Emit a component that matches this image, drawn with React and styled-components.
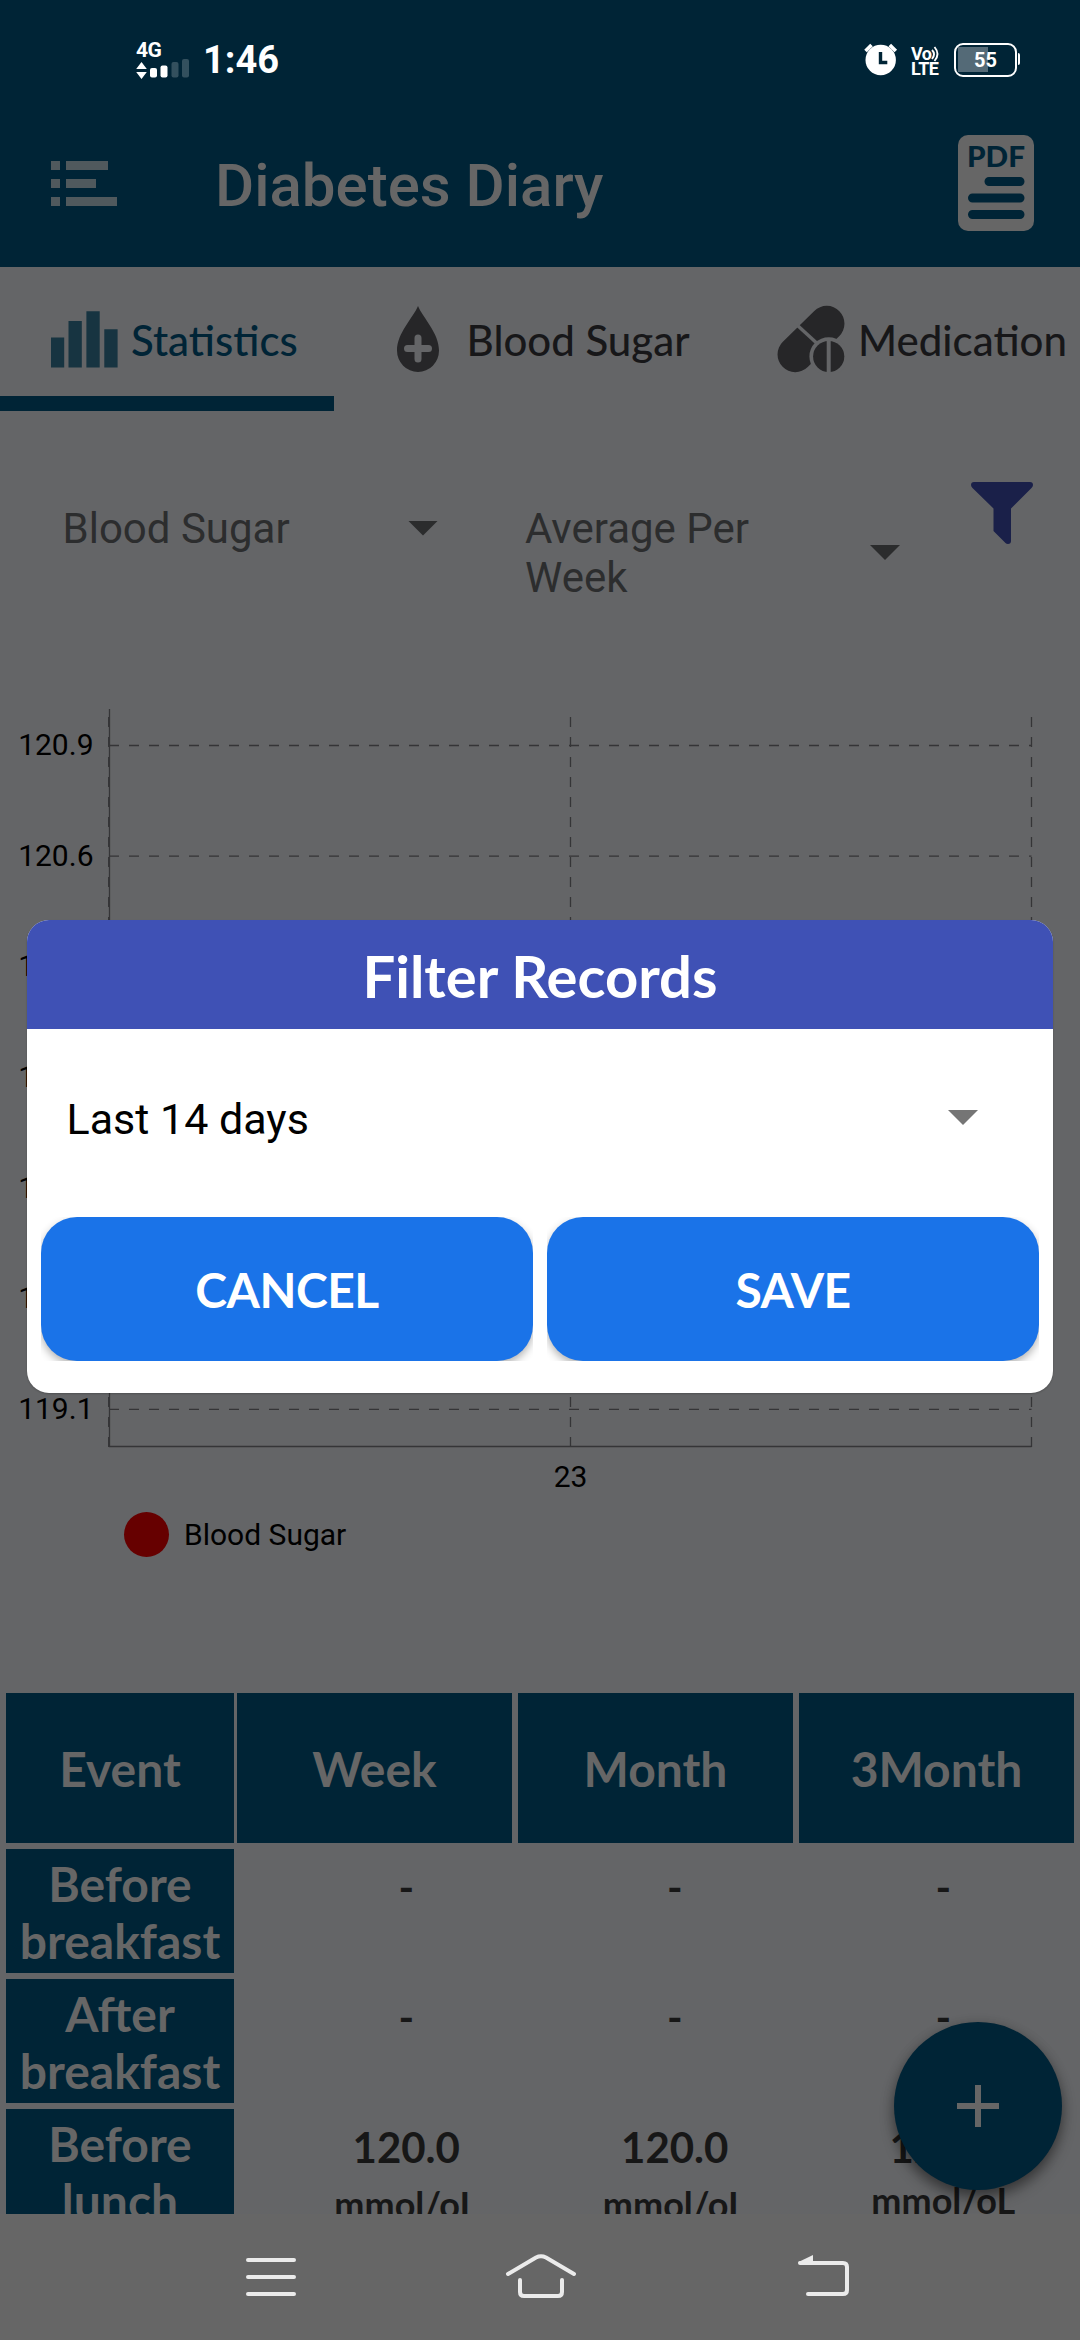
import React from "react";
import styled, { createGlobalStyle } from "styled-components";

const navy = "#002436";
const ground = "#646567";
const dimWhite = "#666666";

const GlobalStyle = createGlobalStyle`
  * { box-sizing: border-box; }
  body { margin: 0; background: ${ground}; }
`;

const Screen = styled.div`
  position: relative;
  display: flex;
  flex-direction: column;
  width: 1080px;
  height: 2340px;
  overflow: hidden;
  background: ${ground};
  font-family: Roboto, sans-serif;
`;

const StatusBar = styled.div`
  display: flex;
  align-items: center;
  height: 99px;
  padding: 20px 60px 0 136px;
  background: ${navy};
  color: #fff;
`;

const Signal = styled.div`
  display: flex;
  flex-direction: column;
  width: 54px;
  height: 42px;
`;

const NetworkType = styled.span`
  height: 20px;
  font-size: 21px;
  line-height: 22px;
  font-weight: 700;
  letter-spacing: -0.5px;
`;

const Clock = styled.span`
  margin-left: 13px;
  font-size: 38px;
  line-height: 44px;
  font-weight: 700;
`;

const StatusIcons = styled.div`
  display: flex;
  align-items: center;
  margin-left: auto;
  height: 42px;
`;

const Volte = styled.div`
  display: flex;
  flex-direction: column;
  width: 30px;
  margin: 2px 13px 0 13px;
  font-weight: 700;
`;

const VolteTop = styled.div`
  display: flex;
  height: 15px;
  font-size: 18px;
  line-height: 15px;
  letter-spacing: -0.6px;
`;

const VolteBottom = styled.div`
  height: 15px;
  font-size: 18px;
  line-height: 15px;
  letter-spacing: -0.6px;
`;

const Battery = styled.div`
  position: relative;
  display: flex;
  align-items: center;
  justify-content: center;
  width: 63px;
  height: 34px;
  margin-right: 3px;
  border: 2.5px solid #fff;
  border-radius: 9px;
  font-size: 20px;
  line-height: 22px;
  font-weight: 700;
  background: linear-gradient(90deg, #546a77 0 30px, transparent 30px) 2px 2px / 55px 25px no-repeat;
  &::after {
    content: "";
    position: absolute;
    right: -5px;
    top: 8px;
    width: 2.5px;
    height: 12px;
    border-radius: 0 2px 2px 0;
    background: #fff;
  }
`;

const AppBar = styled.header`
  display: flex;
  align-items: center;
  height: 168px;
  padding: 0 46px 0 51px;
  background: ${navy};
`;

const AppTitle = styled.h1`
  flex: 1;
  margin: 5px 0 0 98px;
  font-size: 60px;
  line-height: 70px;
  font-weight: 500;
  color: ${dimWhite};
`;

const Tabs = styled.nav`
  display: flex;
  height: 144px;
`;

const Tab = styled.div`
  position: relative;
  display: flex;
  flex: none;
  align-items: center;
  gap: 13px;
  width: ${(p) => p.$width}px;
  padding-left: 50px;
  font-family: Lato, sans-serif;
  font-size: 42px;
  line-height: 50px;
  white-space: nowrap;
  color: ${(p) => (p.$active ? navy : "#171719")};
  font-weight: 500;
  &::after {
    content: "";
    display: ${(p) => (p.$active ? "block" : "none")};
    position: absolute;
    left: 0;
    right: 0;
    bottom: 0;
    height: 15px;
    background: ${navy};
  }
`;

const TabLabel = styled.span`
  margin-left: ${(p) => p.$inset || 0}px;
  padding-top: 1px;
`;

const Controls = styled.div`
  display: flex;
  align-items: flex-start;
  height: 289px;
  padding: 71px 47px 0 62.5px;
`;

const Select = styled.div`
  display: flex;
  align-items: center;
  justify-content: space-between;
  width: ${(p) => p.$width}px;
  margin: 22px ${(p) => p.$gap}px 0 0;
  font-size: 42px;
  line-height: 49px;
  color: #2c2d2e;
`;

const SelectLabel = styled.span`
  max-width: 270px;
`;

const Caret = styled.span`
  width: 30px;
  height: 15px;
  margin-top: ${(p) => p.$lift || 0}px;
  clip-path: polygon(0 0, 100% 0, 50% 100%);
  background: ${(p) => p.$color};
`;

const Plot = styled.svg`
  display: block;
  flex: none;
`;

const Legend = styled.div`
  display: flex;
  align-items: center;
  gap: 15px;
  height: 193px;
  padding: 0 0 125px 124px;
  font-size: 30px;
  line-height: 36px;
  color: #000;
`;

const LegendLabel = styled.span`
  padding-top: 2px;
`;

const LegendDot = styled.span`
  width: 45px;
  height: 45px;
  border-radius: 50%;
  background: #660000;
`;

const Table = styled.section`
  display: flex;
  flex: 1;
  flex-direction: column;
  gap: 6px;
  min-height: 0;
  padding: 0 6px;
  overflow: hidden;
  font-family: Lato, sans-serif;
  font-weight: 700;
`;

const HeadRow = styled.div`
  display: grid;
  flex: none;
  grid-template-columns: 231px 281px 281px 275px;
  height: 150px;
`;

const HeadCell = styled.div`
  display: flex;
  align-items: center;
  justify-content: center;
  margin-right: ${(p) => p.$gap}px;
  padding-top: 1px;
  background: ${navy};
  color: ${dimWhite};
  font-size: 48px;
  line-height: 57px;
`;

const Row = styled.div`
  display: flex;
  flex: none;
  height: 124px;
`;

const EventCell = styled.div`
  flex: none;
  width: 228px;
  margin-right: 38px;
  padding-top: 6px;
  background: ${navy};
  color: ${dimWhite};
  font-size: 48px;
  line-height: 57px;
  text-align: center;
`;

const ValueCell = styled.div`
  display: flex;
  flex: none;
  flex-direction: column;
  width: 268.5px;
  padding-top: 13px;
  font-size: 42px;
  line-height: 50px;
  text-align: center;
  color: #171717;
`;

const Unit = styled.span`
  font-size: 36px;
  line-height: 44px;
  padding-top: ${(p) => p.$drop}px;
`;

const AddButton = styled.button`
  position: absolute;
  left: 894px;
  top: 2022px;
  display: grid;
  place-items: center;
  width: 168px;
  height: 168px;
  padding: 0;
  border: 0;
  border-radius: 50%;
  background: ${navy};
  box-shadow: 0 8px 14px rgba(0, 0, 0, 0.38), 0 2px 12px rgba(0, 0, 0, 0.18);
`;

const SystemNav = styled.footer`
  display: flex;
  flex: none;
  gap: 203px;
  height: 126px;
  padding: 36px 0 0 241px;
  background: #666666;
`;

const NavIcon = styled.svg`
  flex: none;
  margin-right: ${(p) => p.$space || 0}px;
`;

const Dialog = styled.div`
  position: absolute;
  left: 27px;
  top: 920px;
  display: flex;
  flex-direction: column;
  width: 1026px;
  height: 473px;
  border-radius: 22px;
  overflow: hidden;
  background: #fff;
  box-shadow: 0 1px 2px rgba(0, 0, 0, 0.2);
`;

const DialogTitle = styled.h2`
  height: 109px;
  margin: 0;
  padding-top: 4px;
  background: #3f51b5;
  color: #fff;
  font-family: Lato, sans-serif;
  font-size: 58px;
  line-height: 104px;
  font-weight: 700;
  text-align: center;
`;

const DialogSelect = styled.div`
  display: flex;
  align-items: center;
  justify-content: space-between;
  height: 188px;
  padding: 0 75px 9px 39.5px;
  font-size: 43px;
  line-height: 50px;
  color: #000;
`;

const DialogActions = styled.div`
  display: flex;
  gap: 14px;
  padding: 0 14px;
`;

const ActionClip = styled.div`
  width: 492px;
  height: 144px;
  overflow: hidden;
`;

const Action = styled.button`
  width: 100%;
  height: 144px;
  padding: 2px 0 0;
  border: 0;
  border-radius: 36px;
  background: #1a73e8;
  box-shadow: 0 4px 8px rgba(0, 0, 0, 0.3);
  color: #fff;
  font-family: Lato, sans-serif;
  font-size: 48px;
  letter-spacing: -0.5px;
  font-weight: 700;
  line-height: 58px;
`;

const SignalBars = () => (
  <svg width="54" height="22" viewBox="136 58 54 22">
    <path d="M141.5 61l5.3 7h-10.6zM141.5 78l5.3-7h-10.6z" fill="#fff" />
    <rect x="150" y="67" width="7" height="9.5" rx="2" fill="#fff" />
    <rect x="160.5" y="64.5" width="7" height="12" rx="2" fill="#fff" />
    <rect x="171.5" y="61" width="7" height="15.5" rx="2" fill="#33505e" />
    <rect x="182" y="58" width="7" height="18.5" rx="2" fill="#33505e" />
  </svg>
);

const AlarmIcon = () => (
  <svg width="34" height="34" viewBox="864 45 34 34">
    <circle cx="880.7" cy="62" r="15.2" fill="#fff" />
    <path d="M865.5 53l6-6M895.8 53l-6-6" stroke="#fff" strokeWidth="3.6" />
    <path d="M880.5 54v10.5h6.8" fill="none" stroke={navy} strokeWidth="3.4" />
  </svg>
);

const Waves = () => (
  <svg width="9" height="16" viewBox="0 0 9 16">
    <path d="M1 4q4 4 0 9M3.5 1q6 7 0 14" fill="none" stroke="#fff" strokeWidth="1.9" />
  </svg>
);

const MenuIcon = () => (
  <svg width="66" height="45" viewBox="0 0 66 45" fill="#50595d">
    <path d="M0 0h9v9H0zM15 0h42v9H15zM0 18h9v9H0zM15 18h30v9H15zM0 36h9v9H0zM15 36h51v9H15z" />
  </svg>
);

const PdfIcon = () => (
  <svg width="76" height="96" viewBox="0 0 76 96">
    <rect width="76" height="96" rx="10" fill={dimWhite} />
    <text
      x="9"
      y="32"
      textLength="58"
      lengthAdjust="spacingAndGlyphs"
      fontFamily="Lato, sans-serif"
      fontWeight="900"
      fontSize="28"
      fill={navy}
    >
      PDF
    </text>
    <path d="M31 46.5h31M14.5 63h47.5M14.5 79.5h47.5" stroke={navy} strokeWidth="9" strokeLinecap="round" />
  </svg>
);

const StatsIcon = () => (
  <svg width="68" height="66" viewBox="50 306 68 66" fill="#173441">
    <path d="M51 337.5h13.2v30H51zM68.5 321h13.3v46.5H68.5zM86.4 311.3h13.3v56.2H86.4zM104.3 329.3h13.3v38.2H104.3z" />
  </svg>
);

const DropIcon = () => (
  <svg width="68" height="68" viewBox="384 305 68 68">
    <path d="M418 306c5 12 21 27 21 44.5a21 21.5 0 0 1-42 0c0-17.5 16-32.5 21-44.5z" fill="#262628" />
    <path d="M407.5 348.5h21M418 338v21" stroke={ground} strokeWidth="7" strokeLinecap="round" />
  </svg>
);

const PillsIcon = () => (
  <svg width="68" height="68" viewBox="777 305 68 68">
    <path d="M795.3 354.4L826.7 323.6" stroke="#262628" strokeWidth="35.5" strokeLinecap="round" />
    <path d="M797 325l24 22" stroke={ground} strokeWidth="3.4" />
    <circle cx="828.7" cy="356.5" r="19.3" fill={ground} />
    <circle cx="828.7" cy="356.5" r="15.6" fill="#262628" />
    <path d="M828.7 340v34" stroke={ground} strokeWidth="4" />
  </svg>
);

const FunnelIcon = () => (
  <svg width="62" height="62" viewBox="0 0 62 62" fill="#1a2049">
    <path d="M3 0h56q3 0 3 3 0 1.5-1.5 3L40 26.5V59q0 3-3 3-1.5 0-2.5-1L22.5 49V26.5L1.5 6Q0 4.5 0 3 0 0 3 0z" />
  </svg>
);

const ticks = ["120.9", "120.6", "120.3", "120.0", "119.7", "119.4", "119.1"];

const Chart = () => (
  <Plot width="1080" height="800" viewBox="0 700 1080 800">
    <g stroke="#353537" strokeWidth="1.3" fill="none">
      {ticks.map((t, i) => (
        <path key={t} d={`M109 ${745.5 + i * 110.65}H1031.5`} strokeDasharray="10 10" />
      ))}
      {[108.7, 570.5, 1031.5].map((x) => (
        <path key={x} d={`M${x} 717V1447`} strokeDasharray="10 10" />
      ))}
      <path d="M109.5 709V1446.5H1031.5" />
    </g>
    <g fontFamily="Roboto, sans-serif" fontSize="30" fill="#000">
      {ticks.map((t, i) => (
        <text key={t} x="93.5" y={755 + i * 110.65} textAnchor="end">
          {t}
        </text>
      ))}
      <text x="570.5" y="1487" textAnchor="middle">
        23
      </text>
    </g>
  </Plot>
);

const columns = [
  { label: "Event", gap: 3 },
  { label: "Week", gap: 6 },
  { label: "Month", gap: 6 },
  { label: "3Month", gap: 0 },
];

const rows = [
  { event: ["Before", "breakfast"], values: ["-", "-", "-"] },
  { event: ["After", "breakfast"], values: ["-", "-", "-"] },
  { event: ["Before", "lunch"], values: ["120.0", "120.0", "120.0"], unit: "mmol/oL" },
];

export default function App() {
  return (
    <Screen>
      <GlobalStyle />
      <StatusBar>
        <Signal>
          <NetworkType>4G</NetworkType>
          <SignalBars />
        </Signal>
        <Clock>1:46</Clock>
        <StatusIcons>
          <AlarmIcon />
          <Volte>
            <VolteTop>
              Vo
              <Waves />
            </VolteTop>
            <VolteBottom>LTE</VolteBottom>
          </Volte>
          <Battery>55</Battery>
        </StatusIcons>
      </StatusBar>
      <AppBar>
        <MenuIcon />
        <AppTitle>Diabetes Diary</AppTitle>
        <PdfIcon />
      </AppBar>
      <Tabs>
        <Tab $width={334} $active>
          <StatsIcon />
          <TabLabel>Statistics</TabLabel>
        </Tab>
        <Tab $width={393}>
          <DropIcon />
          <TabLabel $inset={1.5}>Blood Sugar</TabLabel>
        </Tab>
        <Tab $width={393}>
          <PillsIcon />
          <TabLabel>Medication</TabLabel>
        </Tab>
      </Tabs>
      <Controls>
        <Select $width={375.5} $gap={87}>
          <SelectLabel>Blood Sugar</SelectLabel>
          <Caret $color="#2b2c2d" $lift={-1} />
        </Select>
        <Select $width={375} $gap={71}>
          <SelectLabel>Average Per Week</SelectLabel>
          <Caret $color="#2b2c2d" $lift={-1} />
        </Select>
        <FunnelIcon />
      </Controls>
      <Chart />
      <Legend>
        <LegendDot />
        <LegendLabel>Blood Sugar</LegendLabel>
      </Legend>
      <Table>
        <HeadRow>
          {columns.map((c) => (
            <HeadCell key={c.label} $gap={c.gap}>
              {c.label}
            </HeadCell>
          ))}
        </HeadRow>
        {rows.map((r) => (
          <Row key={r.event.join()}>
            <EventCell>
              {r.event[0]}
              <br />
              {r.event[1]}
            </EventCell>
            {r.values.map((v, i) => (
              <ValueCell key={i}>
                {v}
                {r.unit && <Unit $drop={i < 2 ? 10 : 6}>{r.unit}</Unit>}
              </ValueCell>
            ))}
          </Row>
        ))}
      </Table>
      <SystemNav>
        <NavIcon width="60" height="54" viewBox="241 2250 60 54">
          <path d="M248 2260h46M248 2277h46M248 2294h46" stroke="#ebebeb" strokeWidth="4" strokeLinecap="round" />
        </NavIcon>
        <NavIcon $space={13} width="74" height="54" viewBox="504 2250 74 54" fill="none" stroke="#ebebeb" strokeWidth="4" strokeLinecap="round">
          <path d="M508 2274l28-16.5q5-2.5 10 0l28 16.5M520 2280v12q0 4 4 4h34q4 0 4-4v-12" />
        </NavIcon>
        <NavIcon width="60" height="54" viewBox="794 2250 60 54">
          <path d="M800 2263h43q4 0 4 4v23q0 4-4 4h-35" fill="none" stroke="#ebebeb" strokeWidth="4" strokeLinecap="round" />
          <path d="M798.5 2262l14.5-7v9h-14z" fill="#ebebeb" />
        </NavIcon>
      </SystemNav>
      <AddButton aria-label="Add">
        <svg width="42" height="42" viewBox="0 0 42 42">
          <path d="M0 21h42M21 0v42" stroke={dimWhite} strokeWidth="6" />
        </svg>
      </AddButton>
      <Dialog>
        <DialogTitle>Filter Records</DialogTitle>
        <DialogSelect>
          Last 14 days
          <Caret $color="#757575" $lift={-2} />
        </DialogSelect>
        <DialogActions>
          <ActionClip>
            <Action>CANCEL</Action>
          </ActionClip>
          <ActionClip>
            <Action>SAVE</Action>
          </ActionClip>
        </DialogActions>
      </Dialog>
    </Screen>
  );
}
